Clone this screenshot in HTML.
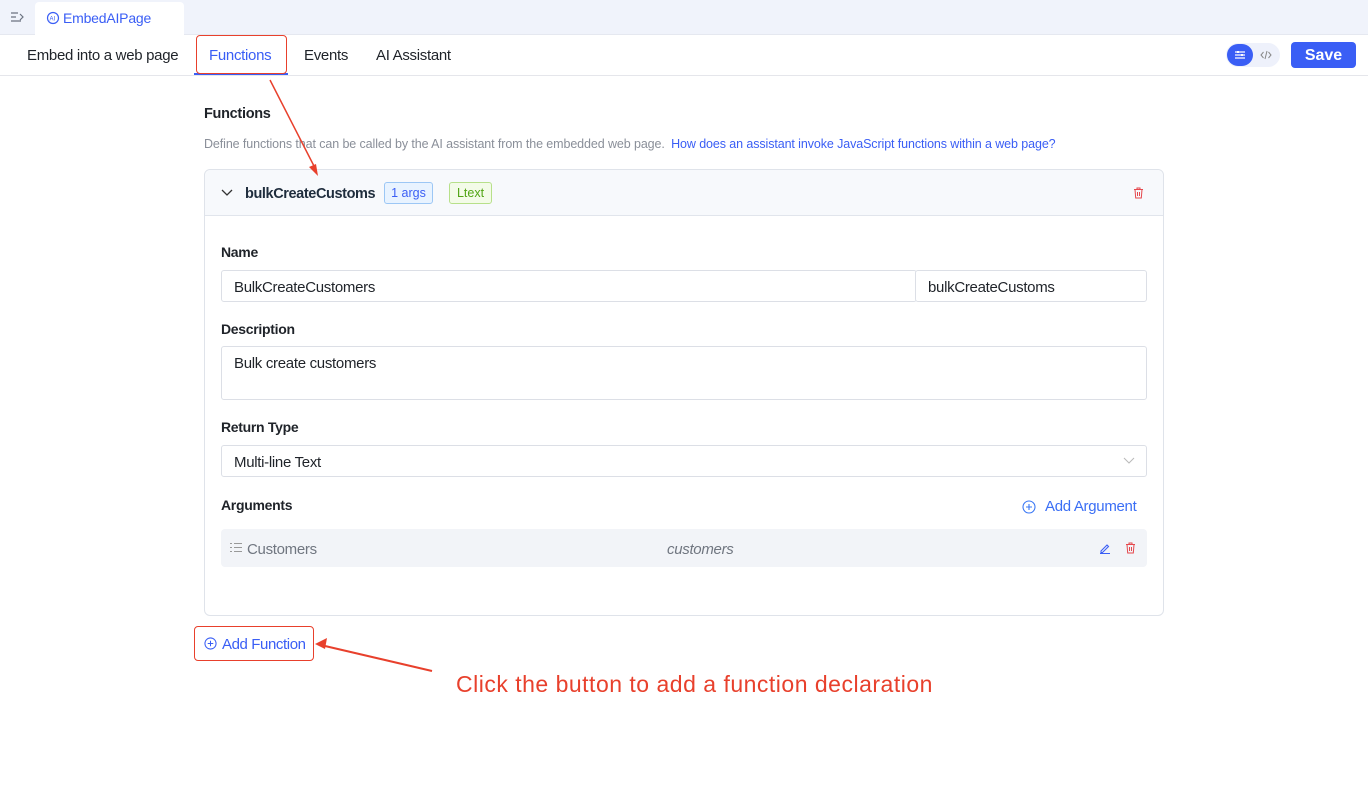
<!DOCTYPE html>
<html><head><meta charset="utf-8"><style>
*{box-sizing:border-box;margin:0;padding:0}
body{width:1368px;height:806px;background:#fff;font-family:"Liberation Sans",sans-serif;position:relative;overflow:hidden;color:#1f2329}
.abs{position:absolute}
.top{left:0;top:0;width:1368px;height:35px;background:#f0f3fb;border-bottom:1px solid #e5e8f0}
.tab{left:35px;top:2px;width:149px;height:34px;background:#fff;border-radius:4px 4px 0 0;color:#3a5ef5;font-size:14px;line-height:32px;padding-left:28px;letter-spacing:-0.2px}
.nav{top:36px;left:0;width:1368px;height:40px;border-bottom:1px solid #e5e6eb}
.nav span{position:absolute;top:11px;font-size:15px;color:#1f2329;letter-spacing:-0.3px}
.lbl{font-size:14px;font-weight:bold;color:#1f2329;letter-spacing:-0.3px}
.inp{border:1px solid #dcdfe6;border-radius:3px;background:#fff;font-size:15px;padding-left:12px;color:#1f2329;letter-spacing:-0.3px}
</style></head><body>
<div class="abs top"></div>
<svg class="abs" style="left:10px;top:11px" width="14" height="12" viewBox="0 0 14 12"><path d="M1 2h7M1 6h5M1 10h10M10 3l3 3-3 3" stroke="#6b7280" stroke-width="1.2" fill="none"/></svg>
<div class="abs tab">EmbedAIPage</div>
<svg class="abs" style="left:46px;top:11px" width="14" height="14" viewBox="0 0 14 14"><circle cx="7" cy="7" r="5.5" stroke="#3a5ef5" fill="none" stroke-width="1.2"/><text x="3.5" y="9.5" font-size="6" fill="#3a5ef5" font-family="Liberation Sans">AI</text></svg>
<div class="abs nav">
<span style="left:27px">Embed into a web page</span>
<span style="left:209px;color:#3a5ef5">Functions</span>
<span style="left:304px">Events</span>
<span style="left:376px">AI Assistant</span>
</div>
<div class="abs" style="left:194px;top:73px;width:94px;height:2px;background:#3a5ef5"></div>
<div class="abs" style="left:196px;top:35px;width:91px;height:39px;border:1.5px solid #e8402c;border-radius:4px"></div>
<div class="abs" style="left:1226px;top:43px;width:54px;height:24px;border-radius:12px;background:#eef1fb"></div>
<div class="abs" style="left:1227px;top:44px;width:26px;height:22px;border-radius:11px;background:#3a5ef5"></div>
<svg class="abs" style="left:1234px;top:49px" width="12" height="12" viewBox="0 0 12 12"><path d="M1 3h10M1 6h10M1 9h10" stroke="#fff" stroke-width="1.2"/><rect x="3" y="2" width="2" height="2" fill="#fff"/><rect x="7" y="5" width="2" height="2" fill="#fff"/></svg>
<svg class="abs" style="left:1260px;top:49px" width="12" height="12" viewBox="0 0 12 12"><path d="M3.5 3L1 6l2.5 3M8.5 3L11 6 8.5 9M7 2L5 10" stroke="#888" stroke-width="1" fill="none"/></svg>
<div class="abs" style="left:1291px;top:42px;width:65px;height:26px;background:#3a5ef5;border-radius:4px;color:#fff;font-size:16px;font-weight:bold;text-align:center;line-height:27px">Save</div>

<div class="abs lbl" style="left:204px;top:106px;font-size:14.5px">Functions</div>
<div class="abs" style="left:204px;top:137px;font-size:12.5px;color:#8a8f99;letter-spacing:-0.1px">Define functions that can be called by the AI assistant from the embedded web page. <span style="color:#3a5ef5;margin-left:3px">How does an assistant invoke JavaScript functions within a web page?</span></div>

<div class="abs" style="left:204px;top:169px;width:960px;height:447px;border:1px solid #dfe3ea;border-radius:6px;background:#fff"></div>
<div class="abs" style="left:205px;top:170px;width:958px;height:46px;background:#f7f9fc;border-bottom:1px solid #e1e5ec;border-radius:6px 6px 0 0"></div>
<svg class="abs" style="left:221px;top:189px" width="12" height="8" viewBox="0 0 12 8"><path d="M1 1l5 5 5-5" stroke="#333" stroke-width="1.3" fill="none"/></svg>
<div class="abs" style="left:245px;top:186px;font-size:14.5px;font-weight:bold;color:#1f2d3d;letter-spacing:-0.4px">bulkCreateCustoms</div>
<div class="abs" style="left:384px;top:182px;width:49px;height:22px;border:1px solid #9cc7f5;background:#e8f3ff;border-radius:3px;color:#3a5ef5;font-size:12.5px;text-align:center;line-height:21px">1 args</div>
<div class="abs" style="left:449px;top:182px;width:43px;height:22px;border:1px solid #b7e08a;background:#f3fbe8;border-radius:3px;color:#52a515;font-size:12.5px;text-align:center;line-height:21px">Ltext</div>
<svg class="abs" style="left:1133px;top:187px" width="11" height="12" viewBox="0 0 11 12"><path d="M1 2.5h9M4 2.5V1h3v1.5M2 2.5l.7 8.5h5.6L9 2.5M4.5 5v4M6.5 5v4" stroke="#e5484d" fill="none" stroke-width="1"/></svg>

<div class="abs lbl" style="left:221px;top:244px">Name</div>
<div class="abs inp" style="left:221px;top:270px;width:696px;height:32px;line-height:33px">BulkCreateCustomers</div>
<div class="abs inp" style="left:915px;top:270px;width:232px;height:32px;line-height:33px">bulkCreateCustoms</div>
<div class="abs lbl" style="left:221px;top:321px">Description</div>
<div class="abs inp" style="left:221px;top:346px;width:926px;height:54px;padding-top:8px">Bulk create customers</div>
<div class="abs lbl" style="left:221px;top:419px">Return Type</div>
<div class="abs inp" style="left:221px;top:445px;width:926px;height:32px;line-height:33px">Multi-line Text</div>
<svg class="abs" style="left:1123px;top:457px" width="12" height="8" viewBox="0 0 12 8"><path d="M1 1l5 5 5-5" stroke="#bbb" stroke-width="1.1" fill="none"/></svg>
<div class="abs lbl" style="left:221px;top:497px">Arguments</div>
<svg class="abs" style="left:1022px;top:500px" width="14" height="14" viewBox="0 0 14 14"><circle cx="7" cy="7" r="6" stroke="#3a78f5" fill="none" stroke-width="1.1"/><path d="M7 4v6M4 7h6" stroke="#3a78f5" stroke-width="1.1"/></svg>
<div class="abs" style="left:1045px;top:498px;font-size:15px;color:#3a6ef5;letter-spacing:-0.3px">Add Argument</div>
<div class="abs" style="left:221px;top:529px;width:926px;height:38px;background:#f2f4f8;border-radius:4px"></div>
<svg class="abs" style="left:229px;top:542px" width="13" height="11" viewBox="0 0 13 11"><path d="M5 1.5h8M5 5.5h8M5 9.5h8M1 1.5h2M1 5.5h2M1 9.5h2" stroke="#999" stroke-width="1"/></svg>
<div class="abs" style="left:247px;top:541px;font-size:15px;color:#707680;letter-spacing:-0.3px">Customers</div>
<div class="abs" style="left:667px;top:541px;font-size:15px;color:#707680;font-style:italic;letter-spacing:-0.3px">customers</div>
<svg class="abs" style="left:1099px;top:542px" width="12" height="12" viewBox="0 0 12 12"><path d="M2 9l6-6 1.5 1.5-6 6H2zM1 11.5h10" stroke="#3a5ef5" fill="none" stroke-width="1.1"/></svg>
<svg class="abs" style="left:1125px;top:542px" width="11" height="12" viewBox="0 0 11 12"><path d="M1 2.5h9M4 2.5V1h3v1.5M2 2.5l.7 8.5h5.6L9 2.5M4.5 5v4M6.5 5v4" stroke="#e5484d" fill="none" stroke-width="1"/></svg>

<div class="abs" style="left:194px;top:626px;width:120px;height:35px;border:1.5px solid #e8402c;border-radius:4px"></div>
<svg class="abs" style="left:204px;top:637px" width="13" height="13" viewBox="0 0 14 14"><circle cx="7" cy="7" r="6" stroke="#3a5ef5" fill="none" stroke-width="1.1"/><path d="M7 4v6M4 7h6" stroke="#3a5ef5" stroke-width="1.1"/></svg>
<div class="abs" style="left:222px;top:636px;font-size:15px;color:#3a5ef5;letter-spacing:-0.4px">Add Function</div>
<div class="abs" style="left:456px;top:671px;font-size:23px;color:#e8402c;letter-spacing:0.5px">Click the button to add a function declaration</div>

<svg class="abs" style="left:0;top:0" width="1368" height="806">
<line x1="270" y1="80" x2="315" y2="168" stroke="#e8402c" stroke-width="1.5"/>
<path d="M318 176l-9-9 7-3z" fill="#e8402c"/>
<line x1="432" y1="671" x2="325" y2="646" stroke="#e8402c" stroke-width="2"/>
<path d="M315 644l12-6-2 11z" fill="#e8402c"/>
</svg>
</body></html>
